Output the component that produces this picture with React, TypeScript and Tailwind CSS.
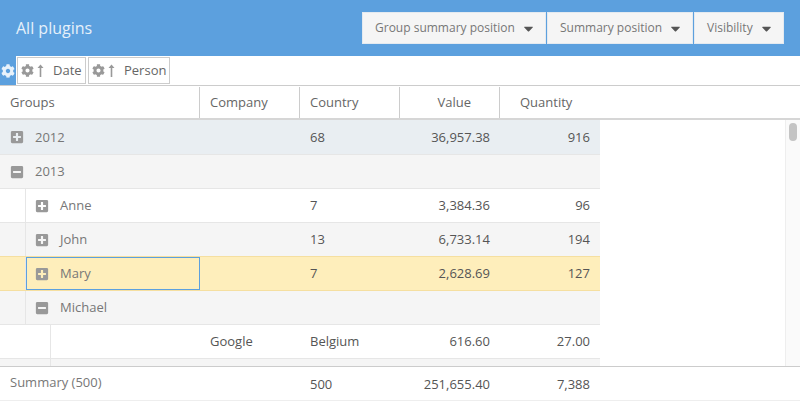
import React from "react";
import { FaCaretDown, FaCog, FaMinusSquare, FaPlusSquare } from "react-icons/fa";

type Row = {
  level: number;
  toggle?: "plus" | "minus";
  label?: string;
  company?: string;
  country?: string;
  value?: string;
  quantity?: string;
  bg: string;
  line?: string;
  selected?: boolean;
};

const rows: Row[] = [
  { level: 0, toggle: "plus", label: "2012", country: "68", value: "36,957.38", quantity: "916", bg: "bg-[#e9eef2] h-[35px]" },
  { level: 0, toggle: "minus", label: "2013", bg: "bg-[#f5f5f5] h-[34px]" },
  { level: 1, toggle: "plus", label: "Anne", country: "7", value: "3,384.36", quantity: "96", bg: "bg-white h-[34px]" },
  { level: 1, toggle: "plus", label: "John", country: "13", value: "6,733.14", quantity: "194", bg: "bg-[#f5f5f5] h-[34px]", line: "border-[#f5dfa0]" },
  { level: 1, toggle: "plus", label: "Mary", country: "7", value: "2,628.69", quantity: "127", bg: "bg-[#feeebb] h-[34px]", line: "border-[#f5dfa0]", selected: true },
  { level: 1, toggle: "minus", label: "Michael", bg: "bg-[#f5f5f5] h-[34px]" },
  { level: 2, company: "Google", country: "Belgium", value: "616.60", quantity: "27.00", bg: "bg-white h-[34px]" },
  { level: 2, bg: "bg-[#f5f5f5] h-[34px]" },
];

const LongArrow = () => (
  <svg width="7" height="13" viewBox="0 0 7 13" className="text-[#999]">
    <path d="M3.5 0.5 L6.5 4 H4.3 V13 H2.7 V4 H0.5 Z" fill="currentColor" />
  </svg>
);

const GroupChip = ({ label, gap }: { label: string; gap: string }) => (
  <div className={`flex h-[27px] items-center border border-[#ccc] pl-[3px] ${gap}`}>
    <FaCog className="text-[13px] text-[#999]" />
    <span className="ml-[3px]">
      <LongArrow />
    </span>
    <span className="ml-[9px] text-[#666]">{label}</span>
  </div>
);

const DropButton = ({ label, width }: { label: string; width: string }) => (
  <button className={`flex h-[32px] items-center justify-between border border-[#e4eaf0] bg-[#f5f5f5] pl-3 pr-[9px] text-[12px] text-[#777] ${width}`}>
    <span>{label}</span>
    <FaCaretDown className="text-[15px] text-[#555]" />
  </button>
);

const groupCellClass = (row: Row) => {
  if (row.selected) return "w-[174px] border border-[#5ca0de] pl-[8px]";
  if (row.level === 0) return "w-[200px] pl-[10px]";
  if (row.level === 1) return "w-[174px] pl-[9px]";
  return "w-[149px]";
};

const GridRow = ({ row }: { row: Row }) => {
  const line = row.line ?? "border-[#e6e6e6]";
  return (
    <div className={`flex w-[600px] shrink-0 border-b ${line} ${row.bg} text-[#555]`}>
      {row.level === 1 && <div className="w-[26px] shrink-0 border-r border-[#e6e6e6]" />}
      {row.level === 2 && <div className="w-[51px] shrink-0 border-r border-[#e6e6e6]" />}
      <div className={`flex shrink-0 items-center ${groupCellClass(row)}`}>
        {row.toggle === "plus" && <FaPlusSquare className="text-[14px] text-[#999]" />}
        {row.toggle === "minus" && <FaMinusSquare className="text-[14px] text-[#999]" />}
        {row.label && <span className="ml-[11px] text-[#777]">{row.label}</span>}
      </div>
      <div className="flex w-[100px] shrink-0 items-center pl-[10px]">{row.company}</div>
      <div className="flex w-[100px] shrink-0 items-center pl-[10px]">{row.country}</div>
      <div className="flex w-[100px] shrink-0 items-center justify-end pr-[10px]">{row.value}</div>
      <div className="flex w-[100px] shrink-0 items-center justify-end pr-[10px]">{row.quantity}</div>
    </div>
  );
};

export default function App() {
  return (
    <div className="flex h-[401px] w-[800px] flex-col overflow-hidden bg-white font-['Open_Sans',sans-serif] text-[13px] leading-none">
      <header className="flex h-[56px] shrink-0 items-center justify-between bg-[#5ca0de] pl-4 pr-4">
        <h1 className="text-[16px] font-normal text-[#e6f0fa]">All plugins</h1>
        <div className="flex gap-px">
          <DropButton label="Group summary position" width="w-[184px]" />
          <DropButton label="Summary position" width="w-[146px]" />
          <DropButton label="Visibility" width="w-[90px]" />
        </div>
      </header>

      <div className="flex h-[30px] shrink-0 items-center border-b border-[#ccc]">
        <div className="flex h-full w-[16px] items-center justify-center bg-[#5ca0de]">
          <FaCog className="text-[14px] text-[#e8f2fb]" />
        </div>
        <GroupChip label="Date" gap="ml-px w-[69px]" />
        <GroupChip label="Person" gap="ml-[2px] w-[82px]" />
      </div>

      <div className="flex h-[34px] shrink-0 border-b-2 border-[#d6d6d6] pt-px text-[#666]">
        <div className="flex w-[200px] items-center border-r border-[#ccc] pl-[10px]">Groups</div>
        <div className="flex w-[100px] items-center border-r border-[#ccc] pl-[10px]">Company</div>
        <div className="flex w-[100px] items-center border-r border-[#ccc] pl-[10px]">Country</div>
        <div className="flex w-[100px] items-center justify-end border-r border-[#ccc] pr-[28px]">Value</div>
        <div className="flex w-[100px] items-center pl-[20px]">Quantity</div>
      </div>

      <div className="flex min-h-0 flex-1">
        <div className="flex flex-1 flex-col overflow-hidden">
          {rows.map((row, i) => (
            <GridRow key={i} row={row} />
          ))}
        </div>
        <div className="w-[15px] shrink-0 border-l border-[#eee] bg-[#fafafa] pl-[3px] pt-[3px]">
          <div className="h-[18px] w-[8px] rounded-[4px] bg-[#c4c4c4]" />
        </div>
      </div>

      <div className="flex h-[35px] shrink-0 border-y border-t-[#ccc] border-b-[#eee] text-[#555]">
        <div className="flex w-[200px] items-center pb-[2px] pl-[10px] text-[#777]">Summary (500)</div>
        <div className="w-[100px]" />
        <div className="flex w-[100px] items-center pl-[10px] pt-px">500</div>
        <div className="flex w-[100px] items-center justify-end pr-[10px] pt-px">251,655.40</div>
        <div className="flex w-[100px] items-center justify-end pr-[10px] pt-px">7,388</div>
      </div>
    </div>
  );
}
